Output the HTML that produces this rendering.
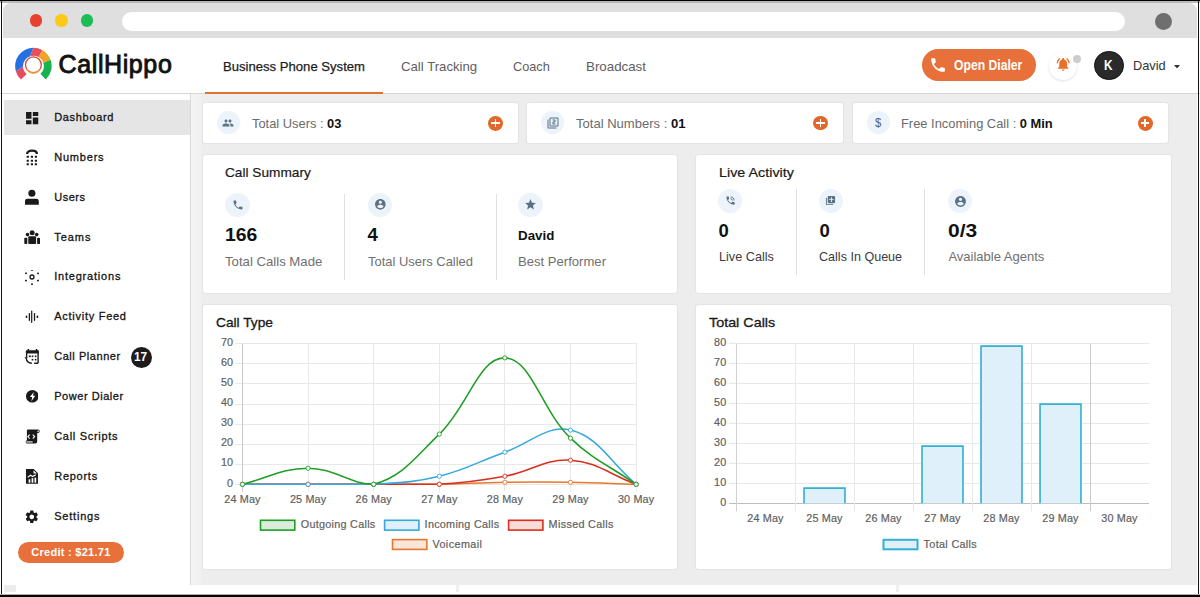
<!DOCTYPE html>
<html><head><meta charset="utf-8"><title>CallHippo Dashboard</title>
<style>
html,body{margin:0;padding:0;width:1200px;height:597px;overflow:hidden;background:#fff;font-family:"Liberation Sans", sans-serif;}
b{font-weight:700}
</style></head><body>
<div style="position:absolute;left:0px;top:0px;width:1200px;height:597px;background:#fff"></div><div style="position:absolute;left:3px;top:3px;width:1193.5px;height:34.7px;background:#dfdfdf;border-radius:8px 8px 0 0"></div><div style="position:absolute;left:29.55px;top:14.2px;width:12.4px;height:12.4px;background:#e8402f;border-radius:50%"></div><div style="position:absolute;left:55.3px;top:14.2px;width:12.4px;height:12.4px;background:#fbc916;border-radius:50%"></div><div style="position:absolute;left:81.0px;top:14.2px;width:12.4px;height:12.4px;background:#1dbd55;border-radius:50%"></div><div style="position:absolute;left:122px;top:11.7px;width:1003px;height:18.9px;background:#fff;border-radius:9.5px"></div><div style="position:absolute;left:1154.6000000000001px;top:13.000000000000002px;width:17.2px;height:17.2px;background:#6f6f6f;border-radius:50%"></div><div style="position:absolute;left:0px;top:93px;width:1200px;height:1px;background:#d6d6d6"></div><svg style="position:absolute;left:15px;top:47px;" width="37" height="37" viewBox="0 0 37 37"><path d="M5.95,32.45 A18.25,18.25 0 0 1 0.86,24.13 L8.01,19.46 A10.4,10.4 0 0 0 11.72,27.07Z" fill="#e84c5c"/><path d="M0.86,24.13 A18.25,18.25 0 0 1 18.40,0.85 L15.19,9.21 A10.4,10.4 0 0 0 8.01,19.46Z" fill="#2371e0"/><path d="M18.40,0.85 A18.25,18.25 0 0 1 27.52,3.30 L23.60,10.09 A10.4,10.4 0 0 0 15.19,9.21Z" fill="#e94c5b"/><path d="M27.52,3.30 A18.25,18.25 0 0 1 35.55,12.86 L28.35,16.06 A10.4,10.4 0 0 0 23.60,10.09Z" fill="#f0a526"/><path d="M35.55,12.86 A18.25,18.25 0 0 1 30.85,32.45 L25.36,26.83 A10.4,10.4 0 0 0 28.35,16.06Z" fill="#17b24d"/><circle cx="18.4" cy="17.8" r="7.9" fill="none" stroke="#d8473b" stroke-width="1.3"/><path d="M11.899999999999999,22.6 A7.9,7.9 0 0 0 24.9,22.6" fill="none" stroke="#f2a03a" stroke-width="1.3"/></svg><div style="position:absolute;left:204.7px;top:92px;width:178px;height:2px;background:#e0712f"></div><div style="position:absolute;left:921.5px;top:49.3px;width:114.8px;height:32px;background:#e8703a;border-radius:16px"></div><svg style="position:absolute;left:929.5px;top:56.8px;" width="16" height="16" viewBox="1.5 1.5 21 21"><path fill="#fff" d="M6.62 10.79c1.44 2.83 3.76 5.14 6.59 6.59l2.2-2.2c.27-.27.67-.36 1.02-.24 1.12.37 2.33.57 3.57.57.55 0 1 .45 1 1V20c0 .55-.45 1-1 1-9.39 0-17-7.61-17-17 0-.55.45-1 1-1h3.5c.55 0 1 .45 1 1 0 1.25.2 2.45.57 3.57.11.35.03.74-.25 1.02l-2.2 2.2z"/></svg><div style="position:absolute;left:1049.3px;top:51.8px;width:28px;height:28px;background:#fff;border-radius:50%;box-shadow:0 1px 2.5px rgba(0,0,0,0.13)"></div><svg style="position:absolute;left:1056.3px;top:57.3px;" width="14.4" height="14.4" viewBox="1 1 22 22"><path fill="#e8702a" d="M7.58 4.08L6.15 2.65C3.75 4.48 2.17 7.3 2.03 10.5h2c.15-2.65 1.51-4.97 3.55-6.42zm12.39 6.42h2c-.15-3.2-1.730-6.02-4.12-7.85l-1.42 1.43c2.02 1.45 3.39 3.77 3.54 6.42zM18 11c0-3.07-1.64-5.640-4.5-6.32V4c0-.83-.67-1.5-1.5-1.5s-1.5.67-1.5 1.5v.68C7.63 5.36 6 7.92 6 11v5l-2 2v1h16v-1l-2-2v-5zm-6 11c.14 0 .27-.01.4-.04.65-.14 1.18-.58 1.44-1.18.1-.24.15-.5.15-.78h-4c.01 1.1.9 2 2.01 2z"/></svg><div style="position:absolute;left:1073px;top:54.9px;width:8px;height:8px;background:#cdcdcd;border-radius:50%"></div><div style="position:absolute;left:1093.8px;top:50.7px;width:29.8px;height:29.8px;background:#2a2a2a;border-radius:50%;box-sizing:border-box;border:1.2px solid #111"></div><svg style="position:absolute;left:1173.5px;top:64.5px;" width="6" height="3.5" viewBox="0 0 6 3.5"><path d="M0 0H6L3 3.5Z" fill="#333"/></svg><div style="position:absolute;left:190px;top:94px;width:1px;height:490.5px;background:#d9d9d9"></div><div style="position:absolute;left:3.7px;top:100px;width:186.3px;height:34.7px;background:#e5e5e5"></div><div style="position:absolute;left:131.0px;top:346.7px;width:21px;height:21px;background:#1c1c1c;border-radius:50%"></div><div style="position:absolute;left:18px;top:541.5px;width:106px;height:21.2px;background:#e8703a;border-radius:11px"></div><div style="position:absolute;left:191px;top:94px;width:1005.5px;height:490.5px;background:#ededed"></div><div style="position:absolute;left:191px;top:94px;width:11px;height:490.5px;background:linear-gradient(90deg,#f4f4f4,#efefef)"></div><div style="position:absolute;left:0px;top:584.5px;width:1198px;height:9px;background:#fff"></div><div style="position:absolute;left:202.8px;top:102.8px;width:314.99999999999994px;height:40.2px;background:#fff;border-radius:2px;box-shadow:0 0 1.5px rgba(0,0,0,0.2)"></div><div style="position:absolute;left:527px;top:102.8px;width:315.79999999999995px;height:40.2px;background:#fff;border-radius:2px;box-shadow:0 0 1.5px rgba(0,0,0,0.2)"></div><div style="position:absolute;left:852.8px;top:102.8px;width:315.20000000000005px;height:40.2px;background:#fff;border-radius:2px;box-shadow:0 0 1.5px rgba(0,0,0,0.2)"></div><div style="position:absolute;left:202.8px;top:154.5px;width:474.40000000000003px;height:138.3px;background:#fff;border-radius:2px;box-shadow:0 0 1.5px rgba(0,0,0,0.2)"></div><div style="position:absolute;left:695.9px;top:154.5px;width:474.9px;height:138.3px;background:#fff;border-radius:2px;box-shadow:0 0 1.5px rgba(0,0,0,0.2)"></div><div style="position:absolute;left:202.8px;top:304.6px;width:474.40000000000003px;height:264.69999999999993px;background:#fff;border-radius:2px;box-shadow:0 0 1.5px rgba(0,0,0,0.2)"></div><div style="position:absolute;left:695.9px;top:304.6px;width:474.9px;height:264.69999999999993px;background:#fff;border-radius:2px;box-shadow:0 0 1.5px rgba(0,0,0,0.2)"></div><div style="position:absolute;left:216.8px;top:111.4px;width:23.0px;height:23.0px;background:#edf3fb;border-radius:50%"></div><svg style="position:absolute;left:222.3px;top:116.9px;" width="12" height="12" viewBox="0 0 24 24"><path fill="#5b7184" d="M16 11c1.66 0 2.99-1.34 2.99-3S17.66 5 16 5c-1.66 0-3 1.34-3 3s1.34 3 3 3zm-8 0c1.66 0 2.99-1.34 2.99-3S9.66 5 8 5C6.340 5 5 6.34 5 8s1.34 3 3 3zm0 2c-2.33 0-7 1.17-7 3.5V19h14v-2.5c0-2.33-4.67-3.5-7-3.5zm8 0c-.29 0-.62.02-.97.05 1.16.84 1.97 1.97 1.97 3.45V19h6v-2.5c0-2.33-4.67-3.5-7-3.5z"/></svg><div style="position:absolute;left:488.20000000000005px;top:115.8px;width:14.8px;height:14.8px;background:#e2672a;border-radius:50%"></div><div style="position:absolute;left:491.40000000000003px;top:122.4px;width:8.4px;height:1.6px;background:#fff"></div><div style="position:absolute;left:494.8px;top:119.0px;width:1.6px;height:8.4px;background:#fff"></div><div style="position:absolute;left:541.2px;top:111.4px;width:23.0px;height:23.0px;background:#edf3fb;border-radius:50%"></div><svg style="position:absolute;left:546.7px;top:116.9px;" width="12" height="12" viewBox="0 0 24 24"><path fill="#5b7184" d="M3 5H1v16c0 1.1.9 2 2 2h16v-2H3V5zm18-4H7c-1.1 0-2 .9-2 2v14c0 1.1.9 2 2 2h14c1.1 0 2-.9 2-2V3c0-1.1-.9-2-2-2zm0 16H7V3h14v14zm-4-4h-4v-2h2c1.1 0 2-.89 2-2V7c0-1.11-.9-2-2-2h-4v2h4v2h-2c-1.1 0-2 .89-2 2v4h6v-2z"/></svg><div style="position:absolute;left:813.1px;top:115.69999999999999px;width:14.8px;height:14.8px;background:#e2672a;border-radius:50%"></div><div style="position:absolute;left:816.3px;top:122.3px;width:8.4px;height:1.6px;background:#fff"></div><div style="position:absolute;left:819.7px;top:118.89999999999999px;width:1.6px;height:8.4px;background:#fff"></div><div style="position:absolute;left:866.8px;top:111.0px;width:23.4px;height:23.4px;background:#edf3fb;border-radius:50%"></div><div style="position:absolute;left:1137.8px;top:115.8px;width:14.8px;height:14.8px;background:#e2672a;border-radius:50%"></div><div style="position:absolute;left:1141.0px;top:122.4px;width:8.4px;height:1.6px;background:#fff"></div><div style="position:absolute;left:1144.4px;top:119.0px;width:1.6px;height:8.4px;background:#fff"></div><div style="position:absolute;left:225.2px;top:192.5px;width:24.6px;height:24.6px;background:#edf3fb;border-radius:50%"></div><svg style="position:absolute;left:231.5px;top:198.8px;" width="12" height="12" viewBox="0 0 24 24"><path fill="#5b7184" d="M6.62 10.79c1.44 2.83 3.76 5.14 6.59 6.59l2.2-2.2c.27-.27.67-.36 1.02-.24 1.12.37 2.33.57 3.57.57.55 0 1 .45 1 1V20c0 .55-.45 1-1 1-9.39 0-17-7.61-17-17 0-.55.45-1 1-1h3.5c.55 0 1 .45 1 1 0 1.25.2 2.45.57 3.57.11.35.03.74-.25 1.02l-2.2 2.2z"/></svg><div style="position:absolute;left:367.7px;top:192.5px;width:24.6px;height:24.6px;background:#edf3fb;border-radius:50%"></div><svg style="position:absolute;left:373.65px;top:198.45000000000002px;" width="12.7" height="12.7" viewBox="0 0 24 24"><path fill="#5b7184" d="M12 2C6.48 2 2 6.48 2 12s4.48 10 10 10 10-4.48 10-10S17.52 2 12 2zm0 3c1.66 0 3 1.34 3 3s-1.34 3-3 3-3-1.34-3-3 1.34-3 3-3zm0 14.2c-2.5 0-4.71-1.28-6-3.22.03-1.99 4-3.08 6-3.08 1.99 0 5.97 1.09 6 3.08-1.29 1.94-3.5 3.22-6 3.22z"/></svg><div style="position:absolute;left:518.4000000000001px;top:192.5px;width:24.6px;height:24.6px;background:#edf3fb;border-radius:50%"></div><svg style="position:absolute;left:524.2px;top:198.3px;" width="13" height="13" viewBox="0 0 24 24"><path fill="#5b7184" d="M12 17.27L18.18 21l-1.64-7.03L22 9.24l-7.19-.61L12 2 9.19 8.63 2 9.24l5.46 4.73L5.82 21z"/></svg><div style="position:absolute;left:344px;top:193.7px;width:1px;height:86px;background:#e0e0e0"></div><div style="position:absolute;left:496px;top:193.7px;width:1px;height:86px;background:#e0e0e0"></div><div style="position:absolute;left:718px;top:188.5px;width:24px;height:24px;background:#edf3fb;border-radius:50%"></div><svg style="position:absolute;left:724.5px;top:195.0px;" width="11" height="11" viewBox="0 0 24 24"><path fill="#5b7184" d="M20 15.5c-1.25 0-2.45-.2-3.57-.57-.35-.11-.74-.03-1.02.24l-2.2 2.2c-2.83-1.44-5.15-3.75-6.59-6.59l2.2-2.21c.28-.26.36-.65.25-1C8.7 6.45 8.5 5.25 8.5 4c0-.55-.45-1-1-1H4c-.55 0-1 .45-1 1 0 9.39 7.61 17 17 17 .55 0 1-.45 1-1v-3.5c0-.55-.45-1-1-1zM19 12h2c0-4.97-4.03-9-9-9v2c3.87 0 7 3.13 7 7zm-4 0h2c0-2.76-2.24-5-5-5v2c1.66 0 3 1.34 3 3z"/></svg><div style="position:absolute;left:818.5px;top:188.5px;width:24px;height:24px;background:#edf3fb;border-radius:50%"></div><svg style="position:absolute;left:825.0px;top:195.0px;" width="11" height="11" viewBox="0 0 24 24"><path fill="#5b7184" d="M4 6H2v14c0 1.1.9 2 2 2h14v-2H4V6zm16-4H8c-1.1 0-2 .9-2 2v12c0 1.1.9 2 2 2h12c1.1 0 2-.9 2-2V4c0-1.1-.9-2-2-2zm-1 9h-4v4h-2v-4H9V9h4V5h2v4h4v2z"/></svg><div style="position:absolute;left:947.7px;top:188.7px;width:24.6px;height:24.6px;background:#edf3fb;border-radius:50%"></div><svg style="position:absolute;left:953.5px;top:194.5px;" width="13" height="13" viewBox="0 0 24 24"><path fill="#5b7184" d="M12 2C6.48 2 2 6.48 2 12s4.48 10 10 10 10-4.48 10-10S17.52 2 12 2zm0 3c1.66 0 3 1.34 3 3s-1.34 3-3 3-3-1.34-3-3 1.34-3 3-3zm0 14.2c-2.5 0-4.71-1.28-6-3.22.03-1.99 4-3.08 6-3.08 1.99 0 5.97 1.09 6 3.08-1.29 1.94-3.5 3.22-6 3.22z"/></svg><div style="position:absolute;left:796px;top:188.5px;width:1px;height:86px;background:#e0e0e0"></div><div style="position:absolute;left:924px;top:188.5px;width:1px;height:86px;background:#e0e0e0"></div><svg style="position:absolute;left:0;top:0" width="1200" height="597" viewBox="0 0 1200 597" font-family='"Liberation Sans", sans-serif'><style>text{stroke:#5f5f5f;stroke-width:0.2px;letter-spacing:0.15px}</style><line x1="235" y1="484.50" x2="637.00" y2="484.50" stroke="#e8e8e8" stroke-width="1"/><line x1="235" y1="464.50" x2="637.00" y2="464.50" stroke="#e8e8e8" stroke-width="1"/><line x1="235" y1="444.50" x2="637.00" y2="444.50" stroke="#e8e8e8" stroke-width="1"/><line x1="235" y1="424.50" x2="637.00" y2="424.50" stroke="#e8e8e8" stroke-width="1"/><line x1="235" y1="404.50" x2="637.00" y2="404.50" stroke="#e8e8e8" stroke-width="1"/><line x1="235" y1="383.50" x2="637.00" y2="383.50" stroke="#e8e8e8" stroke-width="1"/><line x1="235" y1="363.50" x2="637.00" y2="363.50" stroke="#e8e8e8" stroke-width="1"/><line x1="235" y1="343.50" x2="637.00" y2="343.50" stroke="#e8e8e8" stroke-width="1"/><line x1="242.50" y1="343.50" x2="242.50" y2="491.6" stroke="#c8c8c8" stroke-width="1"/><line x1="308.50" y1="343.50" x2="308.50" y2="491.6" stroke="#e8e8e8" stroke-width="1"/><line x1="373.50" y1="343.50" x2="373.50" y2="491.6" stroke="#e8e8e8" stroke-width="1"/><line x1="439.50" y1="343.50" x2="439.50" y2="491.6" stroke="#e8e8e8" stroke-width="1"/><line x1="504.50" y1="343.50" x2="504.50" y2="491.6" stroke="#e8e8e8" stroke-width="1"/><line x1="570.50" y1="343.50" x2="570.50" y2="491.6" stroke="#e8e8e8" stroke-width="1"/><line x1="636.50" y1="343.50" x2="636.50" y2="491.6" stroke="#e8e8e8" stroke-width="1"/><path d="M242.50,484.30 C268.74,484.30 281.86,484.30 308.10,484.30 C334.34,484.30 347.46,484.30 373.70,484.30 C399.94,484.30 413.07,484.30 439.30,484.30 C465.55,483.90 478.65,482.69 504.90,482.29 C531.13,481.89 544.27,481.89 570.50,482.29 C596.75,482.69 609.86,483.50 636.10,484.30" fill="none" stroke="#e8772e" stroke-width="1.55"/><path d="M242.50,484.30 C268.74,484.30 281.86,484.30 308.10,484.30 C334.34,484.30 347.46,484.30 373.70,484.30 C399.94,484.30 413.16,484.30 439.30,484.30 C465.64,482.69 478.94,481.04 504.90,476.27 C531.42,471.40 544.71,458.64 570.50,460.22 C597.19,461.85 609.86,474.67 636.10,484.30" fill="none" stroke="#d8301e" stroke-width="1.55"/><path d="M242.50,484.30 C268.74,484.30 281.86,484.30 308.10,484.30 C334.34,484.30 347.56,484.30 373.70,484.30 C400.04,482.69 413.79,482.52 439.30,476.27 C466.27,469.67 478.53,461.46 504.90,452.19 C531.01,443.00 546.96,424.35 570.50,430.11 C599.44,437.19 609.86,462.62 636.10,484.30" fill="none" stroke="#35a8dc" stroke-width="1.55"/><path d="M242.50,484.30 C268.74,477.88 281.86,468.24 308.10,468.24 C334.34,468.24 350.09,484.30 373.70,484.30 C402.57,476.79 415.64,456.93 439.30,434.12 C468.12,406.35 479.06,357.07 504.90,357.86 C531.54,358.67 540.91,409.62 570.50,438.14 C593.39,460.20 609.86,465.84 636.10,484.30" fill="none" stroke="#1f9e25" stroke-width="1.55"/><circle cx="242.50" cy="484.30" r="2.1" fill="#fff" stroke="#e8772e" stroke-width="0.9"/><circle cx="308.10" cy="484.30" r="2.1" fill="#fff" stroke="#e8772e" stroke-width="0.9"/><circle cx="373.70" cy="484.30" r="2.1" fill="#fff" stroke="#e8772e" stroke-width="0.9"/><circle cx="439.30" cy="484.30" r="2.1" fill="#fff" stroke="#e8772e" stroke-width="0.9"/><circle cx="504.90" cy="482.29" r="2.1" fill="#fff" stroke="#e8772e" stroke-width="0.9"/><circle cx="570.50" cy="482.29" r="2.1" fill="#fff" stroke="#e8772e" stroke-width="0.9"/><circle cx="636.10" cy="484.30" r="2.1" fill="#fff" stroke="#e8772e" stroke-width="0.9"/><circle cx="242.50" cy="484.30" r="2.1" fill="#fff" stroke="#d8301e" stroke-width="0.9"/><circle cx="308.10" cy="484.30" r="2.1" fill="#fff" stroke="#d8301e" stroke-width="0.9"/><circle cx="373.70" cy="484.30" r="2.1" fill="#fff" stroke="#d8301e" stroke-width="0.9"/><circle cx="439.30" cy="484.30" r="2.1" fill="#fff" stroke="#d8301e" stroke-width="0.9"/><circle cx="504.90" cy="476.27" r="2.1" fill="#fff" stroke="#d8301e" stroke-width="0.9"/><circle cx="570.50" cy="460.22" r="2.1" fill="#fff" stroke="#d8301e" stroke-width="0.9"/><circle cx="636.10" cy="484.30" r="2.1" fill="#fff" stroke="#d8301e" stroke-width="0.9"/><circle cx="242.50" cy="484.30" r="2.1" fill="#fff" stroke="#35a8dc" stroke-width="0.9"/><circle cx="308.10" cy="484.30" r="2.1" fill="#fff" stroke="#35a8dc" stroke-width="0.9"/><circle cx="373.70" cy="484.30" r="2.1" fill="#fff" stroke="#35a8dc" stroke-width="0.9"/><circle cx="439.30" cy="476.27" r="2.1" fill="#fff" stroke="#35a8dc" stroke-width="0.9"/><circle cx="504.90" cy="452.19" r="2.1" fill="#fff" stroke="#35a8dc" stroke-width="0.9"/><circle cx="570.50" cy="430.11" r="2.1" fill="#fff" stroke="#35a8dc" stroke-width="0.9"/><circle cx="636.10" cy="484.30" r="2.1" fill="#fff" stroke="#35a8dc" stroke-width="0.9"/><circle cx="242.50" cy="484.30" r="2.1" fill="#fff" stroke="#1f9e25" stroke-width="0.9"/><circle cx="308.10" cy="468.24" r="2.1" fill="#fff" stroke="#1f9e25" stroke-width="0.9"/><circle cx="373.70" cy="484.30" r="2.1" fill="#fff" stroke="#1f9e25" stroke-width="0.9"/><circle cx="439.30" cy="434.12" r="2.1" fill="#fff" stroke="#1f9e25" stroke-width="0.9"/><circle cx="504.90" cy="357.86" r="2.1" fill="#fff" stroke="#1f9e25" stroke-width="0.9"/><circle cx="570.50" cy="438.14" r="2.1" fill="#fff" stroke="#1f9e25" stroke-width="0.9"/><circle cx="636.10" cy="484.30" r="2.1" fill="#fff" stroke="#1f9e25" stroke-width="0.9"/><text x="233.2" y="486.50" text-anchor="end" font-size="10.8" fill="#5f5f5f">0</text><text x="233.2" y="466.43" text-anchor="end" font-size="10.8" fill="#5f5f5f">10</text><text x="233.2" y="446.36" text-anchor="end" font-size="10.8" fill="#5f5f5f">20</text><text x="233.2" y="426.29" text-anchor="end" font-size="10.8" fill="#5f5f5f">30</text><text x="233.2" y="406.22" text-anchor="end" font-size="10.8" fill="#5f5f5f">40</text><text x="233.2" y="386.15" text-anchor="end" font-size="10.8" fill="#5f5f5f">50</text><text x="233.2" y="366.08" text-anchor="end" font-size="10.8" fill="#5f5f5f">60</text><text x="233.2" y="346.01" text-anchor="end" font-size="10.8" fill="#5f5f5f">70</text><text x="242.50" y="502.6" text-anchor="middle" font-size="10.8" fill="#5f5f5f">24 May</text><text x="308.10" y="502.6" text-anchor="middle" font-size="10.8" fill="#5f5f5f">25 May</text><text x="373.70" y="502.6" text-anchor="middle" font-size="10.8" fill="#5f5f5f">26 May</text><text x="439.30" y="502.6" text-anchor="middle" font-size="10.8" fill="#5f5f5f">27 May</text><text x="504.90" y="502.6" text-anchor="middle" font-size="10.8" fill="#5f5f5f">28 May</text><text x="570.50" y="502.6" text-anchor="middle" font-size="10.8" fill="#5f5f5f">29 May</text><text x="636.10" y="502.6" text-anchor="middle" font-size="10.8" fill="#5f5f5f">30 May</text><rect x="260.5" y="520.3" width="34.3" height="9.8" fill="#dbecdc" stroke="#1f9e25" stroke-width="1.6"/><text x="300.8" y="528" font-size="10.8" fill="#5f5f5f" textLength="74.6" lengthAdjust="spacing">Outgoing Calls</text><rect x="384.6" y="520.3" width="34.3" height="9.8" fill="#dff0fa" stroke="#35a8dc" stroke-width="1.6"/><text x="424.6" y="528" font-size="10.8" fill="#5f5f5f" textLength="74.6" lengthAdjust="spacing">Incoming Calls</text><rect x="508.6" y="520.3" width="34.3" height="9.8" fill="#f8dcd7" stroke="#d8301e" stroke-width="1.6"/><text x="548.6" y="528" font-size="10.8" fill="#5f5f5f" textLength="65" lengthAdjust="spacing">Missed Calls</text><rect x="392.5" y="539.5999999999999" width="34.3" height="9.8" fill="#fbe6d9" stroke="#e8772e" stroke-width="1.6"/><text x="432.4" y="547.5" font-size="10.8" fill="#5f5f5f" textLength="49.7" lengthAdjust="spacing">Voicemail</text><line x1="729" y1="503.50" x2="1149.00" y2="503.50" stroke="#bdbdbd" stroke-width="1"/><line x1="729" y1="483.50" x2="1149.00" y2="483.50" stroke="#e8e8e8" stroke-width="1"/><line x1="729" y1="463.50" x2="1149.00" y2="463.50" stroke="#e8e8e8" stroke-width="1"/><line x1="729" y1="443.50" x2="1149.00" y2="443.50" stroke="#e8e8e8" stroke-width="1"/><line x1="729" y1="423.50" x2="1149.00" y2="423.50" stroke="#e8e8e8" stroke-width="1"/><line x1="729" y1="403.50" x2="1149.00" y2="403.50" stroke="#e8e8e8" stroke-width="1"/><line x1="729" y1="383.50" x2="1149.00" y2="383.50" stroke="#e8e8e8" stroke-width="1"/><line x1="729" y1="363.50" x2="1149.00" y2="363.50" stroke="#e8e8e8" stroke-width="1"/><line x1="729" y1="343.50" x2="1149.00" y2="343.50" stroke="#e8e8e8" stroke-width="1"/><line x1="736.50" y1="343.50" x2="736.50" y2="511.3" stroke="#d0d0d0" stroke-width="1"/><line x1="795.50" y1="343.50" x2="795.50" y2="511.3" stroke="#e8e8e8" stroke-width="1"/><line x1="854.50" y1="343.50" x2="854.50" y2="511.3" stroke="#e8e8e8" stroke-width="1"/><line x1="913.50" y1="343.50" x2="913.50" y2="511.3" stroke="#e8e8e8" stroke-width="1"/><line x1="972.50" y1="343.50" x2="972.50" y2="511.3" stroke="#e8e8e8" stroke-width="1"/><line x1="1031.50" y1="343.50" x2="1031.50" y2="511.3" stroke="#e8e8e8" stroke-width="1"/><line x1="1090.50" y1="343.50" x2="1090.50" y2="511.3" stroke="#cacaca" stroke-width="1"/><rect x="803.25" y="487.30" width="42.50" height="16.00" fill="#dff0fa"/><path d="M804.05,503.30 V488.10 H844.95 V503.30" fill="none" stroke="#34b1d1" stroke-width="1.6"/><rect x="921.25" y="445.30" width="42.50" height="58.00" fill="#dff0fa"/><path d="M922.05,503.30 V446.10 H962.95 V503.30" fill="none" stroke="#34b1d1" stroke-width="1.6"/><rect x="980.25" y="345.30" width="42.50" height="158.00" fill="#dff0fa"/><path d="M981.05,503.30 V346.10 H1021.95 V503.30" fill="none" stroke="#34b1d1" stroke-width="1.6"/><rect x="1039.25" y="403.30" width="42.50" height="100.00" fill="#dff0fa"/><path d="M1040.05,503.30 V404.10 H1080.95 V503.30" fill="none" stroke="#34b1d1" stroke-width="1.6"/><text x="726.4" y="506.10" text-anchor="end" font-size="10.8" fill="#5f5f5f">0</text><text x="726.4" y="486.10" text-anchor="end" font-size="10.8" fill="#5f5f5f">10</text><text x="726.4" y="466.10" text-anchor="end" font-size="10.8" fill="#5f5f5f">20</text><text x="726.4" y="446.10" text-anchor="end" font-size="10.8" fill="#5f5f5f">30</text><text x="726.4" y="426.10" text-anchor="end" font-size="10.8" fill="#5f5f5f">40</text><text x="726.4" y="406.10" text-anchor="end" font-size="10.8" fill="#5f5f5f">50</text><text x="726.4" y="386.10" text-anchor="end" font-size="10.8" fill="#5f5f5f">60</text><text x="726.4" y="366.10" text-anchor="end" font-size="10.8" fill="#5f5f5f">70</text><text x="726.4" y="346.10" text-anchor="end" font-size="10.8" fill="#5f5f5f">80</text><text x="765.50" y="522" text-anchor="middle" font-size="10.8" fill="#5f5f5f">24 May</text><text x="824.50" y="522" text-anchor="middle" font-size="10.8" fill="#5f5f5f">25 May</text><text x="883.50" y="522" text-anchor="middle" font-size="10.8" fill="#5f5f5f">26 May</text><text x="942.50" y="522" text-anchor="middle" font-size="10.8" fill="#5f5f5f">27 May</text><text x="1001.50" y="522" text-anchor="middle" font-size="10.8" fill="#5f5f5f">28 May</text><text x="1060.50" y="522" text-anchor="middle" font-size="10.8" fill="#5f5f5f">29 May</text><text x="1119.50" y="522" text-anchor="middle" font-size="10.8" fill="#5f5f5f">30 May</text><rect x="883.5" y="539.8" width="34" height="9.5" fill="#dff0fa" stroke="#36b0d2" stroke-width="2"/><text x="923.6" y="547.5" font-size="10.8" fill="#5f5f5f" textLength="53.3" lengthAdjust="spacing">Total Calls</text></svg><div style="position:absolute;left:456px;top:585px;width:3px;height:7px;background:#efefef"></div><div style="position:absolute;left:896px;top:585px;width:3px;height:7px;background:#efefef"></div><div style="position:absolute;left:4px;top:585px;width:12px;height:7px;background:#ececec"></div><div style="position:absolute;left:0px;top:0px;width:1200px;height:1px;background:#000"></div><div style="position:absolute;left:0px;top:1px;width:1200px;height:1.5px;background:#b8b8b8"></div><div style="position:absolute;left:1px;top:0px;width:1px;height:597px;background:#111"></div><div style="position:absolute;left:1198px;top:0px;width:1px;height:597px;background:#111"></div><div style="position:absolute;left:0px;top:594px;width:1200px;height:1px;background:#b0b0b0"></div><div style="position:absolute;left:0px;top:595px;width:1200px;height:2px;background:#000"></div><svg style="position:absolute;left:23.77px;top:109.67px;" width="16.3" height="16.3" viewBox="0 0 24 24"><path fill="#1a1a1a" d="M3 13h8V3H3v10zm0 8h8v-6H3v6zm10 0h8V11h-8v10zm0-18v6h8V3h-8z"/></svg><svg style="position:absolute;left:25px;top:149px;" width="14" height="17" viewBox="0 0 14 17"><path d="M2.1 5.0 C2.1 0.6 11.9 0.6 11.9 5.0" fill="none" stroke="#1a1a1a" stroke-width="2.3"/><rect x="1.65" y="6.65" width="2.2" height="2.1" rx="0.3" fill="#1a1a1a"/><rect x="5.80" y="6.65" width="2.2" height="2.1" rx="0.3" fill="#1a1a1a"/><rect x="9.80" y="6.65" width="2.2" height="2.1" rx="0.3" fill="#1a1a1a"/><rect x="1.65" y="10.65" width="2.2" height="2.1" rx="0.3" fill="#1a1a1a"/><rect x="5.80" y="10.65" width="2.2" height="2.1" rx="0.3" fill="#1a1a1a"/><rect x="9.80" y="10.65" width="2.2" height="2.1" rx="0.3" fill="#1a1a1a"/><rect x="1.65" y="14.25" width="2.2" height="2.1" rx="0.3" fill="#1a1a1a"/><rect x="5.80" y="14.25" width="2.2" height="2.1" rx="0.3" fill="#1a1a1a"/><rect x="9.80" y="14.25" width="2.2" height="2.1" rx="0.3" fill="#1a1a1a"/></svg><svg style="position:absolute;left:25px;top:189px;" width="14" height="16" viewBox="0 0 14 16"><circle cx="6.9" cy="4.3" r="3.55" fill="#1a1a1a"/><path d="M0 15.7 V12 Q0 9.9 2.4 9.8 H11.4 Q13.8 9.9 13.8 12 V15.7Z" fill="#1a1a1a"/></svg><svg style="position:absolute;left:23.8px;top:230px;" width="16.4" height="14.5" viewBox="0 0 16.4 14.5"><circle cx="8.2" cy="2.8" r="2.5" fill="#1a1a1a"/><circle cx="3.5" cy="4.6" r="1.8" fill="#1a1a1a"/><circle cx="12.7" cy="4.6" r="1.8" fill="#1a1a1a"/><rect x="4.3" y="6.3" width="7.8" height="7.7" rx="0.8" fill="#1a1a1a"/><rect x="0.3" y="7.8" width="3.0" height="6.2" rx="0.8" fill="#1a1a1a"/><rect x="13.1" y="7.8" width="3.0" height="6.2" rx="0.8" fill="#1a1a1a"/></svg><svg style="position:absolute;left:24.9px;top:270.1px;" width="14" height="15" viewBox="0 0 14 15"><circle cx="7" cy="7" r="2.0" fill="none" stroke="#1a1a1a" stroke-width="1.3"/><rect x="6.10" y="-0.65" width="1.8" height="1.5" fill="#1a1a1a"/><rect x="0.10" y="2.55" width="1.8" height="1.5" fill="#1a1a1a"/><rect x="12.10" y="2.65" width="1.8" height="1.5" fill="#1a1a1a"/><rect x="0.10" y="9.85" width="1.8" height="1.5" fill="#1a1a1a"/><rect x="12.00" y="9.85" width="1.8" height="1.5" fill="#1a1a1a"/><rect x="6.10" y="13.45" width="1.8" height="1.5" fill="#1a1a1a"/></svg><svg style="position:absolute;left:24px;top:310px;" width="16" height="14" viewBox="0 0 16 14"><rect x="1.75" y="5.50" width="1.5" height="2.50" rx="0.6" fill="#1a1a1a"/><rect x="4.75" y="2.90" width="1.3" height="8.00" rx="0.6" fill="#1a1a1a"/><rect x="7.10" y="0.60" width="1.2" height="12.30" rx="0.6" fill="#1a1a1a"/><rect x="9.85" y="2.90" width="1.3" height="8.00" rx="0.6" fill="#1a1a1a"/><rect x="12.65" y="5.50" width="1.5" height="2.50" rx="0.6" fill="#1a1a1a"/></svg><svg style="position:absolute;left:24px;top:348px;" width="16" height="17" viewBox="0 0 16 17"><rect x="3.6" y="1.0" width="1.5" height="2.4" fill="#1a1a1a"/><rect x="11.8" y="1.0" width="1.5" height="2.4" fill="#1a1a1a"/><rect x="1.9" y="2.3" width="12.9" height="3.1" rx="0.6" fill="#1a1a1a"/><path d="M2.6 3 V9.4 M14.1 3 V14.6 Q14.1 15.3 13.4 15.3 H10.2" fill="none" stroke="#1a1a1a" stroke-width="1.4"/><path d="M2.3 10.2 Q2.6 14.8 7.9 15.2" fill="none" stroke="#1a1a1a" stroke-width="1.4"/><path d="M0.5 9.2 H3.7 L2.3 11.5Z" fill="#1a1a1a"/><rect x="4.80" y="7.50" width="2.0" height="1.6" fill="#1a1a1a"/><rect x="7.70" y="7.50" width="1.6" height="1.6" fill="#1a1a1a"/><rect x="10.80" y="7.50" width="1.6" height="1.6" fill="#1a1a1a"/><rect x="7.70" y="10.90" width="1.6" height="1.6" fill="#1a1a1a"/><rect x="10.80" y="10.90" width="1.6" height="1.6" fill="#1a1a1a"/></svg><svg style="position:absolute;left:25.6px;top:390.2px;" width="12.6" height="12.6" viewBox="0 0 12.6 12.6"><circle cx="6.3" cy="6.3" r="6.3" fill="#1a1a1a"/><path d="M7.8 2.0 L3.9 7.1 H6.2 L5.4 11.3 L9.3 5.7 H7.0Z" fill="#fff"/></svg><svg style="position:absolute;left:25px;top:429px;" width="15" height="15" viewBox="0 0 15 15"><path d="M1.9 1.6 Q1.9 0.4 3.1 0.4 H12.9 A1.8 1.8 0 0 1 12.9 4.0 H12.2 V12.5 A2 2 0 0 1 10.2 14.6 H1.8 A1.8 1.8 0 0 1 1.8 11.3 H1.9Z" fill="#1a1a1a"/><circle cx="13.1" cy="2.2" r="0.8" fill="#fff"/><path d="M4.6 5.6 L2.9 7.6 L4.6 9.6 M7.8 5.6 L9.6 7.6 L7.8 9.6" fill="none" stroke="#fff" stroke-width="1.1"/><rect x="1.3" y="12.4" width="6.3" height="1.1" fill="#fff"/></svg><svg style="position:absolute;left:26px;top:469px;" width="12.2" height="14.9" viewBox="0 0 12.2 14.9"><path d="M0 0 H7.8 L12 4.2 V14.7 H0Z" fill="#1a1a1a"/><path d="M7.6 1.3 V4.5 H10.8Z" fill="#fff"/><rect x="2.6" y="10.3" width="1.7" height="3.4" fill="#fff"/><rect x="5.6" y="9.2" width="1.7" height="4.5" fill="#fff"/><rect x="8.5" y="8.6" width="1.7" height="5.1" fill="#fff"/><path d="M1.7 8.4 L4.4 6.2 L6.6 7.6 L9.8 5.7" fill="none" stroke="#fff" stroke-width="1.2"/></svg><svg style="position:absolute;left:24.2px;top:508.8px;" width="15.6" height="15.6" viewBox="0 0 24 24"><path fill="#1a1a1a" d="M19.14 12.94c.04-.3.06-.61.06-.94 0-.32-.02-.64-.07-.94l2.03-1.58c.18-.14.23-.41.12-.61l-1.92-3.32c-.12-.22-.37-.29-.59-.22l-2.39.96c-.5-.38-1.03-.7-1.62-.94l-.36-2.54c-.04-.24-.24-.41-.48-.41h-3.84c-.24 0-.43.17-.47.41l-.36 2.54c-.59.24-1.13.57-1.62.94l-2.39-.96c-.22-.08-.47 0-.59.22L2.74 8.87c-.12.21-.08.47.12.61l2.03 1.58c-.05.3-.09.63-.09.94s.02.64.07.94l-2.030 1.58c-.18.14-.23.41-.12.61l1.92 3.32c.12.22.37.29.59.22l2.39-.96c.5.38 1.03.7 1.62.94l.36 2.54c.05.24.24.41.48.41h3.84c.24 0 .44-.17.47-.41l.36-2.54c.59-.24 1.13-.56 1.62-.94l2.39.96c.22.08.47 0 .59-.22l1.92-3.32c.12-.22.07-.47-.12-.61l-2.01-1.58zM12 15.6c-1.98 0-3.6-1.62-3.6-3.6s1.62-3.6 3.6-3.6 3.6 1.62 3.6 3.6-1.62 3.6-3.6 3.6z"/></svg><div id="t0" style="position:absolute;left:58.60px;top:52.04px;font-size:25px;line-height:25px;font-weight:400;color:#111;white-space:nowrap;letter-spacing:0.6px;-webkit-text-stroke:0.9px #111;">CallHippo</div><div id="t1" style="position:absolute;left:223.20px;top:60.00px;font-size:13px;line-height:13px;font-weight:400;color:#1e1e1e;white-space:nowrap;transform:scaleX(1.0078);transform-origin:0 0;-webkit-text-stroke:0.25px #1e1e1e;">Business Phone System</div><div id="t2" style="position:absolute;left:401.30px;top:60.00px;font-size:13px;line-height:13px;font-weight:400;color:#5e5e5e;white-space:nowrap;transform:scaleX(1.0141);transform-origin:0 0;">Call Tracking</div><div id="t3" style="position:absolute;left:513.30px;top:60.00px;font-size:13px;line-height:13px;font-weight:400;color:#5e5e5e;white-space:nowrap;transform:scaleX(0.9766);transform-origin:0 0;">Coach</div><div id="t4" style="position:absolute;left:586.30px;top:60.00px;font-size:13px;line-height:13px;font-weight:400;color:#5e5e5e;white-space:nowrap;transform:scaleX(1.0248);transform-origin:0 0;">Broadcast</div><div id="t5" style="position:absolute;left:954.00px;top:57.55px;font-size:14px;line-height:14px;font-weight:700;color:#fff;white-space:nowrap;transform:scaleX(0.8690);transform-origin:0 0;">Open Dialer</div><div id="t6" style="position:absolute;left:1104.40px;top:58.07px;font-size:14.8px;line-height:14.8px;font-weight:700;color:#fff;white-space:nowrap;transform:scaleX(0.8000);transform-origin:0 0;">K</div><div id="t7" style="position:absolute;left:1133.30px;top:58.70px;font-size:13px;line-height:13px;font-weight:400;color:#333;white-space:nowrap;transform:scaleX(0.9835);transform-origin:0 0;">David</div><div id="t8" style="position:absolute;left:54.20px;top:111.99px;font-size:11px;line-height:11px;font-weight:400;color:#141414;white-space:nowrap;letter-spacing:0.684px;-webkit-text-stroke:0.3px #141414;">Dashboard</div><div id="t9" style="position:absolute;left:54.20px;top:151.86px;font-size:11px;line-height:11px;font-weight:400;color:#141414;white-space:nowrap;letter-spacing:0.796px;-webkit-text-stroke:0.3px #141414;">Numbers</div><div id="t10" style="position:absolute;left:54.20px;top:191.73px;font-size:11px;line-height:11px;font-weight:400;color:#141414;white-space:nowrap;letter-spacing:0.516px;-webkit-text-stroke:0.3px #141414;">Users</div><div id="t11" style="position:absolute;left:54.20px;top:231.60px;font-size:11px;line-height:11px;font-weight:400;color:#141414;white-space:nowrap;letter-spacing:0.948px;-webkit-text-stroke:0.3px #141414;">Teams</div><div id="t12" style="position:absolute;left:54.20px;top:271.47px;font-size:11px;line-height:11px;font-weight:400;color:#141414;white-space:nowrap;letter-spacing:0.792px;-webkit-text-stroke:0.3px #141414;">Integrations</div><div id="t13" style="position:absolute;left:54.20px;top:311.34px;font-size:11px;line-height:11px;font-weight:400;color:#141414;white-space:nowrap;letter-spacing:0.736px;-webkit-text-stroke:0.3px #141414;">Activity Feed</div><div id="t14" style="position:absolute;left:54.20px;top:351.21px;font-size:11px;line-height:11px;font-weight:400;color:#141414;white-space:nowrap;letter-spacing:0.553px;-webkit-text-stroke:0.3px #141414;">Call Planner</div><div id="t15" style="position:absolute;left:54.20px;top:391.08px;font-size:11px;line-height:11px;font-weight:400;color:#141414;white-space:nowrap;letter-spacing:0.548px;-webkit-text-stroke:0.3px #141414;">Power Dialer</div><div id="t16" style="position:absolute;left:54.20px;top:430.95px;font-size:11px;line-height:11px;font-weight:400;color:#141414;white-space:nowrap;letter-spacing:0.698px;-webkit-text-stroke:0.3px #141414;">Call Scripts</div><div id="t17" style="position:absolute;left:54.20px;top:470.82px;font-size:11px;line-height:11px;font-weight:400;color:#141414;white-space:nowrap;letter-spacing:0.745px;-webkit-text-stroke:0.3px #141414;">Reports</div><div id="t18" style="position:absolute;left:54.20px;top:510.69px;font-size:11px;line-height:11px;font-weight:400;color:#141414;white-space:nowrap;letter-spacing:0.793px;-webkit-text-stroke:0.3px #141414;">Settings</div><div id="t19" style="position:absolute;left:134.00px;top:351.44px;font-size:12px;line-height:12px;font-weight:700;color:#fff;white-space:nowrap;transform:scaleX(0.9881);transform-origin:0 0;">17</div><div id="t20" style="position:absolute;left:31.20px;top:546.69px;font-size:11px;line-height:11px;font-weight:700;color:#fff;white-space:nowrap;letter-spacing:0.285px;">Credit : $21.71</div><div id="t21" style="position:absolute;left:251.90px;top:116.50px;font-size:13px;line-height:13px;font-weight:400;color:#6b6b6b;white-space:nowrap;transform:scaleX(0.9897);transform-origin:0 0;">Total Users : <b style="color:#111">03</b></div><div id="t22" style="position:absolute;left:576.30px;top:116.50px;font-size:13px;line-height:13px;font-weight:400;color:#6b6b6b;white-space:nowrap;transform:scaleX(1.0025);transform-origin:0 0;">Total Numbers : <b style="color:#111">01</b></div><div id="t23" style="position:absolute;left:875.20px;top:117.44px;font-size:12px;line-height:12px;font-weight:400;color:#4f6578;white-space:nowrap;transform:scaleX(0.9421);transform-origin:0 0;">$</div><div id="t24" style="position:absolute;left:900.80px;top:116.50px;font-size:13px;line-height:13px;font-weight:400;color:#6b6b6b;white-space:nowrap;transform:scaleX(0.9904);transform-origin:0 0;">Free Incoming Call : <b style="color:#111">0 Min</b></div><div id="t25" style="position:absolute;left:224.80px;top:166.00px;font-size:13px;line-height:13px;font-weight:400;color:#1a1a1a;white-space:nowrap;transform:scaleX(1.0511);transform-origin:0 0;-webkit-text-stroke:0.2px #1a1a1a;">Call Summary</div><div id="t26" style="position:absolute;left:225.20px;top:225.94px;font-size:18.5px;line-height:18.5px;font-weight:700;color:#111;white-space:nowrap;transform:scaleX(1.0462);transform-origin:0 0;">166</div><div id="t27" style="position:absolute;left:367.50px;top:225.74px;font-size:18.5px;line-height:18.5px;font-weight:700;color:#111;white-space:nowrap;">4</div><div id="t28" style="position:absolute;left:518.30px;top:228.87px;font-size:13.5px;line-height:13.5px;font-weight:700;color:#111;white-space:nowrap;transform:scaleX(0.9873);transform-origin:0 0;">David</div><div id="t29" style="position:absolute;left:224.80px;top:254.60px;font-size:13px;line-height:13px;font-weight:400;color:#707070;white-space:nowrap;transform:scaleX(1.0124);transform-origin:0 0;">Total Calls Made</div><div id="t30" style="position:absolute;left:367.50px;top:254.60px;font-size:13px;line-height:13px;font-weight:400;color:#707070;white-space:nowrap;transform:scaleX(0.9953);transform-origin:0 0;">Total Users Called</div><div id="t31" style="position:absolute;left:518.30px;top:254.60px;font-size:13px;line-height:13px;font-weight:400;color:#707070;white-space:nowrap;transform:scaleX(1.0066);transform-origin:0 0;">Best Performer</div><div id="t32" style="position:absolute;left:718.60px;top:166.40px;font-size:13px;line-height:13px;font-weight:400;color:#1a1a1a;white-space:nowrap;transform:scaleX(1.1027);transform-origin:0 0;-webkit-text-stroke:0.2px #1a1a1a;">Live Activity</div><div id="t33" style="position:absolute;left:718.60px;top:221.74px;font-size:18.5px;line-height:18.5px;font-weight:700;color:#111;white-space:nowrap;">0</div><div id="t34" style="position:absolute;left:819.40px;top:221.74px;font-size:18.5px;line-height:18.5px;font-weight:700;color:#111;white-space:nowrap;">0</div><div id="t35" style="position:absolute;left:948.40px;top:221.74px;font-size:18.5px;line-height:18.5px;font-weight:700;color:#111;white-space:nowrap;transform:scaleX(1.1315);transform-origin:0 0;">0/3</div><div id="t36" style="position:absolute;left:718.60px;top:250.40px;font-size:13px;line-height:13px;font-weight:400;color:#3c3c3c;white-space:nowrap;transform:scaleX(0.9741);transform-origin:0 0;">Live Calls</div><div id="t37" style="position:absolute;left:819.40px;top:250.40px;font-size:13px;line-height:13px;font-weight:400;color:#3c3c3c;white-space:nowrap;transform:scaleX(0.9663);transform-origin:0 0;">Calls In Queue</div><div id="t38" style="position:absolute;left:948.40px;top:250.40px;font-size:13px;line-height:13px;font-weight:400;color:#707070;white-space:nowrap;">Available Agents</div><div id="t39" style="position:absolute;left:216.00px;top:315.50px;font-size:13px;line-height:13px;font-weight:400;color:#1a1a1a;white-space:nowrap;transform:scaleX(1.0562);transform-origin:0 0;-webkit-text-stroke:0.3px #1a1a1a;">Call Type</div><div id="t40" style="position:absolute;left:709.30px;top:315.50px;font-size:13px;line-height:13px;font-weight:400;color:#1a1a1a;white-space:nowrap;transform:scaleX(1.1039);transform-origin:0 0;-webkit-text-stroke:0.3px #1a1a1a;">Total Calls</div>
</body></html>
